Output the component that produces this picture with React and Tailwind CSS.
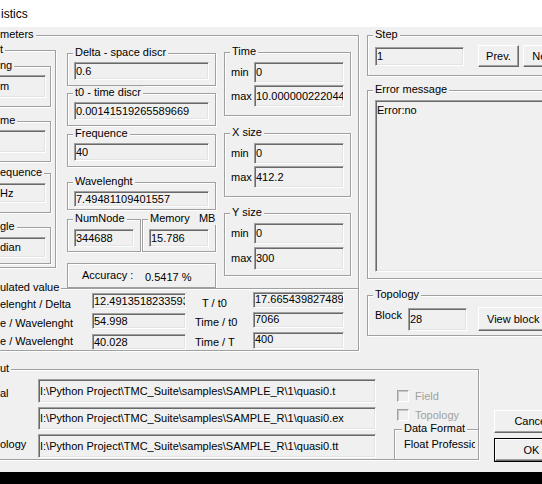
const FONT = "font-['Liberation_Sans',Arial,sans-serif]";

// classic etched group frame, caption sits on the top line
function GroupBox({ label, labelClass = 'left-[5px]', className = '', children }) {
  return (
    <div className={`relative border border-[#a0a0a0] shadow-[1px_1px_0_#fff,inset_1px_1px_0_#fff] ${className}`}>
      {label && (
        <span className={`absolute top-[-8px] ${labelClass} bg-[#f0f0f0] px-[2px] leading-[13px] whitespace-pre`}>
          {label}
        </span>
      )}
      {children}
    </div>
  );
}

// sunken read-only edit
function Edit({ children, className = '', pad = 'pl-[1px]', align = 'items-center' }) {
  return (
    <div className={`flex ${align} ${pad} border border-t-[#a0a0a0] border-l-[#a0a0a0] border-b-white border-r-white shadow-[inset_1px_1px_0_#696969,inset_-1px_-1px_0_#e3e3e3] bg-[#f0f0f0] overflow-hidden whitespace-nowrap leading-[13px] ${className}`}>
      {children}
    </div>
  );
}

function Button({ children, className = '' }) {
  return (
    <div className={`flex items-center justify-center border border-t-white border-l-white border-b-[#696969] border-r-[#696969] shadow-[inset_-1px_-1px_0_#a0a0a0] bg-[#f0f0f0] whitespace-nowrap overflow-hidden ${className}`}>
      {children}
    </div>
  );
}

function CheckBox({ label, className = '' }) {
  return (
    <div className={`flex items-center h-[12px] ${className}`}>
      <div className="w-[12px] h-[12px] shrink-0 border border-t-[#a0a0a0] border-l-[#a0a0a0] border-b-white border-r-white shadow-[inset_1px_1px_0_#c8c8c8] bg-[#f0f0f0]" />
      <span className="ml-[6px] text-[#a0a0a0] leading-[12px] whitespace-nowrap">{label}</span>
    </div>
  );
}

const units = [
  { label: 'ng', value: 'm', box: 'mt-[15px] h-[41px]', edit: 'mt-[8px] h-[23px]' },
  { label: 'me', value: '', box: 'mt-[14px] h-[41px]', edit: 'mt-[8px] h-[23px]' },
  { label: 'equence', value: 'Hz', box: 'mt-[11px] h-[40px]', edit: 'mt-[9px] h-[20px]' },
  { label: 'gle', value: 'dian', box: 'mt-[14px] h-[37px]', edit: 'mt-[9px] h-[21px]' },
];

function UnitsColumn() {
  return (
    <GroupBox label="t" labelClass="left-[9px]" className="w-[68px] h-[218px] mt-[14px] shrink-0">
      <div className="flex flex-col pl-[5px] pr-[4px]">
        {units.map((u) => (
          <GroupBox key={u.label} label={u.label} labelClass="left-[3px]" className={u.box}>
            <Edit pad="pl-[4px]" className={`${u.edit} mr-[4px]`}>{u.value}</Edit>
          </GroupBox>
        ))}
      </div>
    </GroupBox>
  );
}

function ValueBox({ label, value, className = '', editClass = 'mt-[8px] h-[18px]' }) {
  return (
    <GroupBox label={label} className={className}>
      <div className="px-[6px]">
        <Edit className={editClass}>{value}</Edit>
      </div>
    </GroupBox>
  );
}

function MiddleColumn() {
  return (
    <div className="ml-[11px] mt-[17px] w-[149px] shrink-0 flex flex-col">
      <ValueBox label="Delta - space discr" value="0.6" className="h-[33px]" />
      <ValueBox label="t0 - time discr" value="0.00141519265589669" className="mt-[7px] h-[33px]" />
      <ValueBox label="Frequence" value="40" className="mt-[8px] h-[33px]" />
      <ValueBox label="Wavelenght" value="7.49481109401557" className="mt-[15px] h-[28px]" editClass="mt-[8px] h-[16px]" />
      <div className="flex gap-[1px] mt-[9px]">
        <ValueBox label="NumNode" value="344688" className="w-[74px] h-[33px]" editClass="mt-[9px] h-[18px]" />
        <ValueBox label={'Memory   MB'} value="15.786" className="w-[74px] h-[33px]" editClass="mt-[9px] h-[18px]" />
      </div>
      <GroupBox className="mt-[11px] h-[25px]">
        <div className="flex items-center h-full pl-[14px] whitespace-nowrap">
          <span className="w-[63px]">Accuracy :</span>
          <span className="mt-[4px]">0.5417 %</span>
        </div>
      </GroupBox>
    </div>
  );
}

function RangeBox({ label, min, max, className = '', maxClass = 'mt-[2px] h-[22px]' }) {
  return (
    <GroupBox label={label} className={className}>
      <div className="flex flex-col">
        <div className="flex items-center mt-[9px]">
          <span className="w-[29px] pl-[6px]">min</span>
          <Edit className="w-[90px] h-[21px]">{min}</Edit>
        </div>
        <div className={`flex items-center ${maxClass}`}>
          <span className="w-[29px] pl-[6px]">max</span>
          <Edit className="w-[90px] h-full">{max}</Edit>
        </div>
      </div>
    </GroupBox>
  );
}

function RangeColumn() {
  return (
    <div className="ml-[8px] mt-[16px] w-[127px] shrink-0 flex flex-col">
      <RangeBox label="Time" min="0" max="10.0000002220446" className="h-[64px]" />
      <RangeBox label="X size" min="0" max="412.2" className="mt-[17px] h-[64px]" />
      <RangeBox label="Y size" min="0" max="300" className="mt-[16px] h-[63px]" maxClass="mt-[3px] h-[23px]" />
    </div>
  );
}

function Calculated() {
  return (
    <GroupBox label="ulated value" labelClass="left-[17px]" className="-mt-[1px] h-[63px]">
      <div className="flex items-start whitespace-nowrap">
        <div className="w-[111px] pl-[19px] flex flex-col leading-[13px]">
          <span className="mt-[9px]">elenght / Delta</span>
          <span className="mt-[6px]">e / Wavelenght</span>
          <span className="mt-[5px]">e / Wavelenght</span>
        </div>
        <div className="w-[94px] flex flex-col">
          <Edit className="mt-[4px] h-[16px]">12.4913518233593</Edit>
          <Edit className="mt-[4px] h-[16px]">54.998</Edit>
          <Edit className="mt-[5px] h-[16px]">40.028</Edit>
        </div>
        <div className="w-[67px] flex flex-col leading-[13px]">
          <span className="mt-[8px] pl-[16px]">T / t0</span>
          <span className="mt-[6px] pl-[9px]">Time / t0</span>
          <span className="mt-[7px] pl-[9px]">Time / T</span>
        </div>
        <div className="w-[91px] flex flex-col">
          <Edit align="items-start" className="mt-[3px] h-[16px] leading-[12px]">17.6654398274893</Edit>
          <Edit align="items-start" className="mt-[4px] h-[16px] leading-[12px]">7066</Edit>
          <Edit align="items-start" className="mt-[4px] h-[17px] leading-[12px]">400</Edit>
        </div>
      </div>
    </GroupBox>
  );
}

function LeftPanel() {
  return (
    <div className="-ml-[20px] mt-[8px] w-[379px] shrink-0 flex flex-col">
      <GroupBox label="meters" labelClass="left-[17px]" className="h-[254px]">
        <div className="flex items-start pl-[7px]">
          <UnitsColumn />
          <MiddleColumn />
          <RangeColumn />
        </div>
      </GroupBox>
      <Calculated />
    </div>
  );
}

function RightPanel() {
  return (
    <div className="ml-[8px] mt-[8px] w-[200px] shrink-0 flex flex-col">
      <GroupBox label="Step" className="h-[41px]">
        <div className="flex items-start pl-[7px]">
          <Edit className="mt-[11px] w-[89px] h-[19px]">1</Edit>
          <Button className="ml-[14px] mt-[9px] w-[41px] h-[22px]">Prev.</Button>
          <Button className="ml-[4px] mt-[9px] w-[41px] h-[22px]">Next</Button>
        </div>
      </GroupBox>
      <GroupBox label="Error message" className="mt-[14px] h-[189px]">
        <div className="pl-[7px]">
          <Edit align="items-start" className="mt-[9px] h-[172px] pt-[3px]">Error:no</Edit>
        </div>
      </GroupBox>
      <GroupBox label="Topology" className="mt-[16px] h-[41px]">
        <div className="flex items-start">
          <span className="w-[40px] pl-[7px] mt-[13px] leading-[13px]">Block</span>
          <Edit className="mt-[12px] w-[59px] h-[23px]">28</Edit>
          <Button className="ml-[11px] mt-[11px] w-[75px] h-[24px] justify-start pl-[8px]">View block</Button>
        </div>
      </GroupBox>
    </div>
  );
}

const files = [
  { path: 'I:\\Python Project\\TMC_Suite\\samples\\SAMPLE_R\\1\\quasi0.t', cls: 'mt-[9px] h-[24px]' },
  { path: 'I:\\Python Project\\TMC_Suite\\samples\\SAMPLE_R\\1\\quasi0.ex', cls: 'mt-[4px] h-[23px]' },
  { path: 'I:\\Python Project\\TMC_Suite\\samples\\SAMPLE_R\\1\\quasi0.tt', cls: 'mt-[4px] h-[24px]' },
];

function OutputPanel() {
  return (
    <GroupBox label="ut" labelClass="left-[17px]" className="-ml-[20px] w-[499px] h-[91px] shrink-0">
      <div className="flex h-full whitespace-nowrap">
        <div className="w-[57px] pl-[19px] flex flex-col leading-[13px]">
          <span className="mt-[17px]">al</span>
          <span className="mt-[38px]">ology</span>
        </div>
        <div className="w-[338px] flex flex-col">
          {files.map((f) => (
            <Edit key={f.path} className={f.cls}>{f.path}</Edit>
          ))}
        </div>
        <div className="ml-[18px] flex-1 flex flex-col">
          <CheckBox label="Field" className="mt-[20px] ml-[3px]" />
          <CheckBox label="Topology" className="mt-[7px] ml-[3px]" />
          <GroupBox label="Data Format" labelClass="left-[7px]" className="mt-auto -mr-[1px] -mb-[1px] h-[31px]">
            <div className="pl-[9px] pt-[8px] w-[80px] overflow-hidden leading-[13px]">Float Professional</div>
          </GroupBox>
        </div>
      </div>
    </GroupBox>
  );
}

function DialogButtons() {
  return (
    <div className="ml-[15px] mt-[41px] flex flex-col shrink-0">
      <Button className="w-[75px] h-[23px]">Cancel</Button>
      <div className="mt-[5px] w-[75px] h-[24px] border border-black flex">
        <Button className="flex-1">OK</Button>
      </div>
    </div>
  );
}

export default function App() {
  return (
    <div className={`w-[542px] h-[484px] overflow-hidden bg-[#f0f0f0] text-[11px] text-black flex flex-col ${FONT}`}>
      <div className="h-[27px] shrink-0 bg-white flex items-center text-[12px] pl-[1px]">istics</div>
      <div className="flex-1 flex flex-col">
        <div className="flex items-start">
          <LeftPanel />
          <RightPanel />
        </div>
        <div className="flex items-start mt-[18px]">
          <OutputPanel />
          <DialogButtons />
        </div>
      </div>
      <div className="h-[12px] shrink-0 bg-black" />
    </div>
  );
}
